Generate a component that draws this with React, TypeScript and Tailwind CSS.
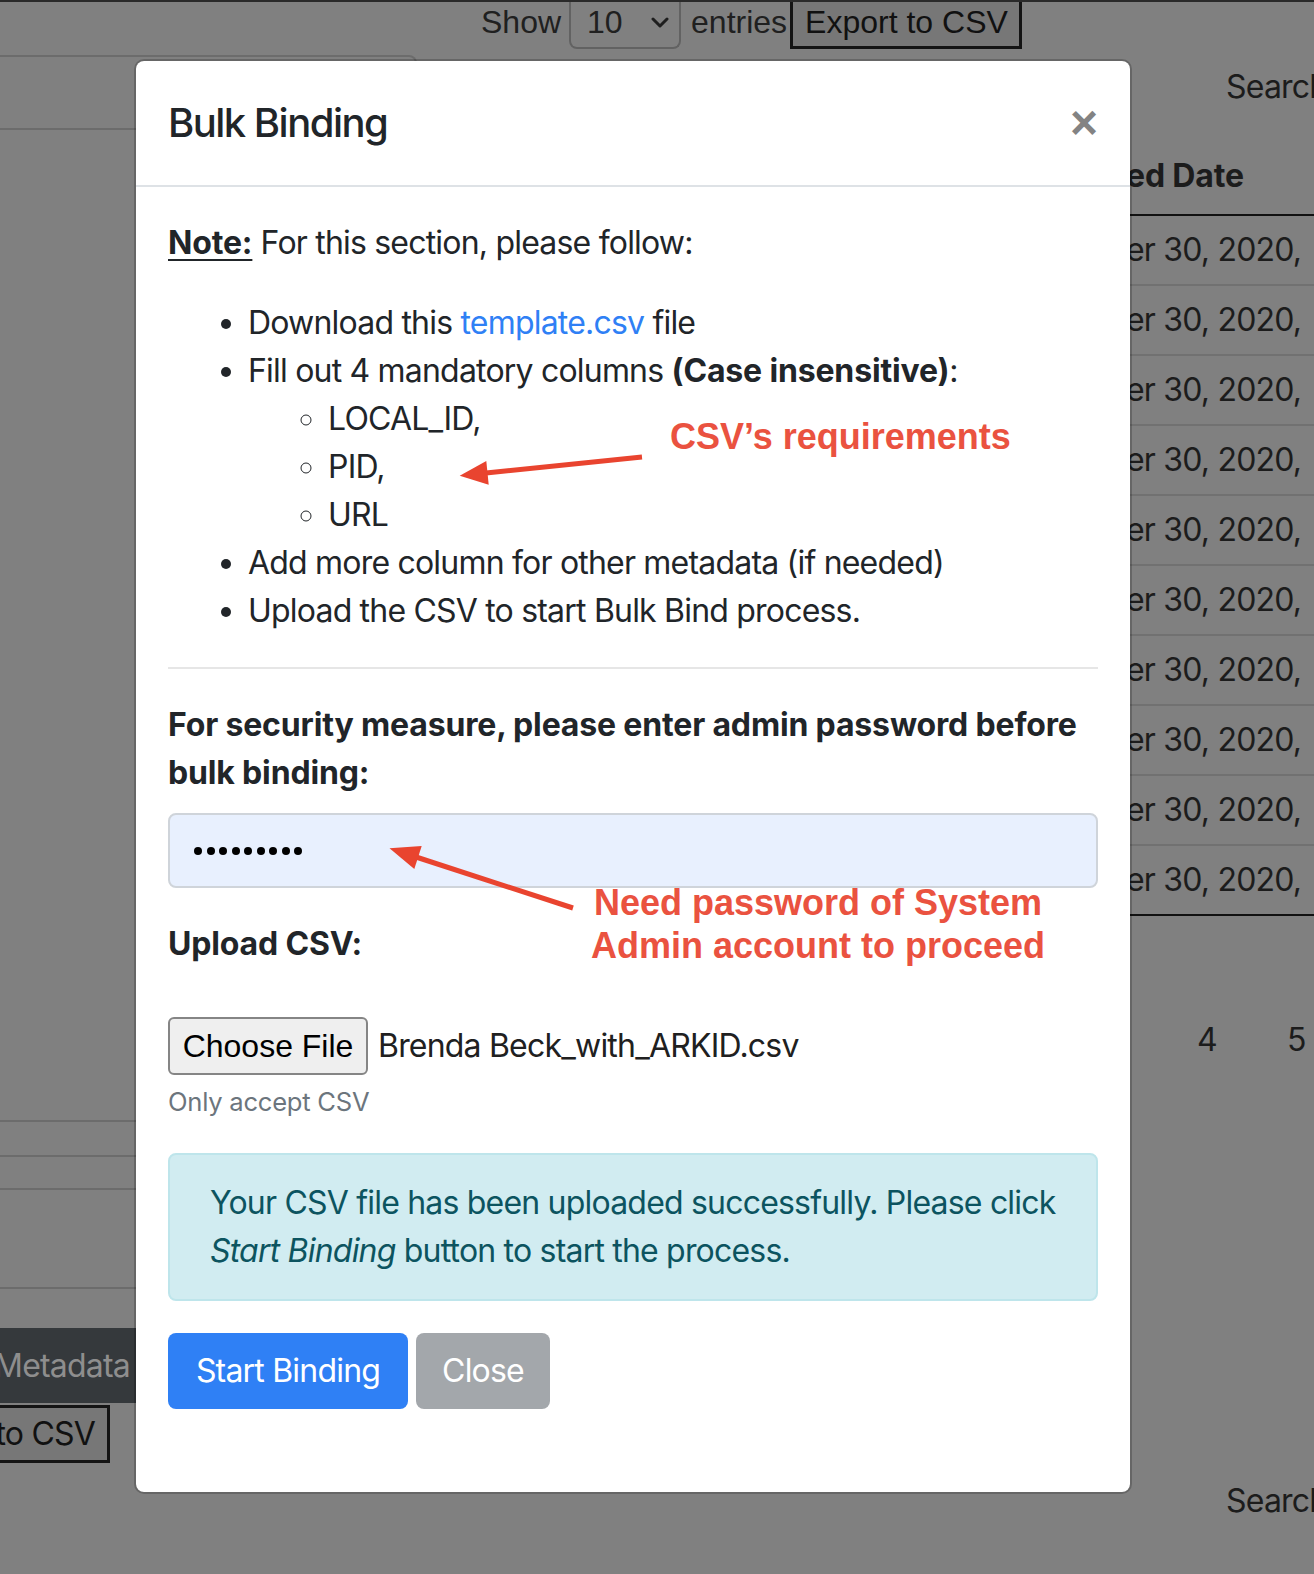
import React from "react";

const GRID_LINE = "border-[#6c6c6c]";

function Chevron() {
  return (
    <svg width="18" height="12" viewBox="0 0 18 12" className="mt-[15px]">
      <path d="M2 2l7 7 7-7" fill="none" stroke="#1e1e1e" strokeWidth="3" strokeLinecap="round" strokeLinejoin="round" />
    </svg>
  );
}

function BackgroundPage() {
  const rows = Array.from({ length: 10 }, (_, i) => i);

  return (
    <div className="border-t-2 border-[#2a2a2a]">
      <div className="flex h-[47px] items-stretch pl-[481px] font-['Liberation_Sans',sans-serif] tracking-normal text-[#202020]">
        <span className="leading-[40px]">Show</span>
        <div className="ml-[8px] flex w-[112px] items-start justify-between rounded-b-[8px] border-x-2 border-b-2 border-[#626262] pl-[16px] pr-[10px]">
          <span className="leading-[40px]">10</span>
          <Chevron />
        </div>
        <span className="ml-[10px] leading-[40px]">entries</span>
        <div className="ml-[3px] w-[232px] border-x-[3px] border-b-[3px] border-[#141414] bg-[#777777] pl-[12px] leading-[40px] text-[#111]">
          Export to CSV
        </div>
      </div>

      <div className="flex items-start">
        <div className="w-[417px] shrink-0">
          <div className={`mt-[6px] h-[75px] rounded-tr-[8px] border-y-2 border-r-2 ${GRID_LINE}`} />
          <div className={`mt-[990px] h-[35px] border-t-2 ${GRID_LINE}`} />
          <div className={`h-[33px] border-t-2 ${GRID_LINE}`} />
          <div className={`h-[99px] border-t-2 ${GRID_LINE}`} />
          <div className={`h-[41px] border-t-2 ${GRID_LINE}`} />
          <div className="flex h-[75px] w-[136px] items-center justify-end overflow-hidden whitespace-nowrap bg-[#35393c] pr-[6px] text-[#8e8e8e]">
            Metadata
          </div>
          <div className="mt-[2px] flex h-[58px] w-[110px] items-center justify-end overflow-hidden whitespace-nowrap border-y-[3px] border-r-[3px] border-[#141414] bg-[#777777] pr-[12px] text-[#111]">
            to CSV
          </div>
        </div>

        <div className="flex-1" />

        <div className="w-[188px] shrink-0 whitespace-nowrap text-[#1c1c1c]">
          <div className="mt-[14px] pl-[100px] leading-[48px]">Search</div>
          <div className="border-b-2 border-[#111] pb-[14px] pt-[41px] font-bold leading-[48px] tracking-[-0.005em]">
            ed Date
          </div>
          {rows.map((i) => (
            <div
              key={i}
              className={`flex h-[70px] items-center border-b-2 ${
                i === rows.length - 1 ? "border-[#111]" : "border-[#717171]"
              }`}
            >
              er 30, 2020,
            </div>
          ))}
          <div className="mt-[100px] flex pl-[71px] leading-[48px]">
            <span>4</span>
            <span className="ml-[70px]">5</span>
          </div>
          <div className="mt-[413px] pl-[100px] leading-[48px]">Search</div>
        </div>
      </div>
    </div>
  );
}

function PasswordDots() {
  return (
    <div className="flex items-center gap-[4.5px]">
      {Array.from({ length: 9 }, (_, i) => (
        <span key={i} className="h-[8px] w-[8px] rounded-full bg-black" />
      ))}
    </div>
  );
}

function BulkBindingModal() {
  return (
    <div className="absolute left-[134px] top-[59px] flex h-[1435px] w-[998px] flex-col rounded-[10px] border-2 border-black/20 bg-white bg-clip-padding text-[#212529]">
      <div className="flex items-center justify-between border-b-2 border-[#dee2e6] p-[32px]">
        <h5 className="text-[40px] font-medium leading-[60px] tracking-[-0.038em]">Bulk Binding</h5>
        <span className="font-['Liberation_Sans',sans-serif] text-[48px] font-bold leading-none tracking-normal text-[#838383]">
          ×
        </span>
      </div>

      <div className="p-[32px] leading-[48px]">
        <p className="mb-[32px]">
          <b className="font-bold tracking-[-0.005em] underline decoration-2 underline-offset-[5px]">Note:</b> For this
          section, please follow:
        </p>

        <ul className="mb-[32px] list-disc pl-[80px]">
          <li>
            Download this <a className="text-[#2f80f5]">template.csv</a> file
          </li>
          <li>
            Fill out 4 mandatory columns <b className="font-bold tracking-[-0.005em]">(Case insensitive)</b>:
            <ul className="list-[circle] pl-[80px]">
              <li>LOCAL_ID,</li>
              <li>PID,</li>
              <li>URL</li>
            </ul>
          </li>
          <li>Add more column for other metadata (if needed)</li>
          <li>Upload the CSV to start Bulk Bind process.</li>
        </ul>

        <hr className="mb-[32px] border-t-2 border-[#e6e6e6]" />

        <label className="mb-[16px] block whitespace-nowrap font-bold tracking-[-0.005em]">
          For security measure, please enter admin password before
          <br />
          bulk binding:
        </label>
        <div className="mb-[32px] flex h-[75px] items-center rounded-[8px] border-2 border-[#cfd4da] bg-[#e8f0fe] pl-[24px]">
          <PasswordDots />
        </div>

        <label className="block font-bold tracking-[-0.005em]">Upload CSV:</label>
        <div className="mt-[49px] flex items-center">
          <span className="flex h-[58px] w-[200px] items-center justify-center rounded-[6px] border-2 border-[#858585] bg-[#efefef] font-['Liberation_Sans',sans-serif] tracking-normal text-black">
            Choose File
          </span>
          <span className="ml-[10px] text-[#202020]">Brenda Beck_with_ARKID.csv</span>
        </div>
        <p className="mt-[8px] text-[25.6px] leading-[38px] tracking-[-0.01em] text-[#6c757d]">Only accept CSV</p>

        <div className="mt-[32px] whitespace-nowrap rounded-[8px] border-2 border-[#bee5eb] bg-[#d1ecf1] px-[40px] py-[24px] text-[#0c5460]">
          Your CSV file has been uploaded successfully. Please click
          <br />
          <i>Start Binding</i> button to start the process.
        </div>

        <div className="mt-[32px] flex gap-[8px]">
          <button className="h-[76px] w-[240px] rounded-[8px] bg-[#2f80f5] text-white">Start Binding</button>
          <button className="h-[76px] w-[134px] rounded-[8px] bg-[#a3a7ab] text-white">Close</button>
        </div>
      </div>
    </div>
  );
}

function Annotations() {
  return (
    <>
      <svg className="pointer-events-none absolute left-0 top-0" width="1314" height="1574">
        <line x1="642" y1="457" x2="486" y2="473" stroke="#e9442f" strokeWidth="5" />
        <polygon points="459.7,475.8 486.3,461 488.7,484.8" fill="#e9442f" />
        <line x1="573" y1="908" x2="416" y2="857" stroke="#e9442f" strokeWidth="5" />
        <polygon points="389.5,848.2 421.7,846.1 414.3,868.9" fill="#e9442f" />
      </svg>
      <div className="absolute left-[670px] top-[416px] whitespace-nowrap font-['Liberation_Sans',sans-serif] text-[36px] font-bold leading-[42px] tracking-normal text-[#ea5240]">
        CSV’s requirements
      </div>
      <div className="absolute left-[568px] top-[881px] w-[500px] text-center font-['Liberation_Sans',sans-serif] text-[36px] font-bold leading-[43px] tracking-normal text-[#ea5240]">
        Need password of System
        <br />
        Admin account to proceed
      </div>
    </>
  );
}

export default function App() {
  return (
    <div className="relative h-[1574px] w-[1314px] overflow-hidden bg-[#808080] font-['Inter','Liberation_Sans',sans-serif] text-[32px] tracking-[-0.025em]">
      <BackgroundPage />
      <BulkBindingModal />
      <Annotations />
    </div>
  );
}
